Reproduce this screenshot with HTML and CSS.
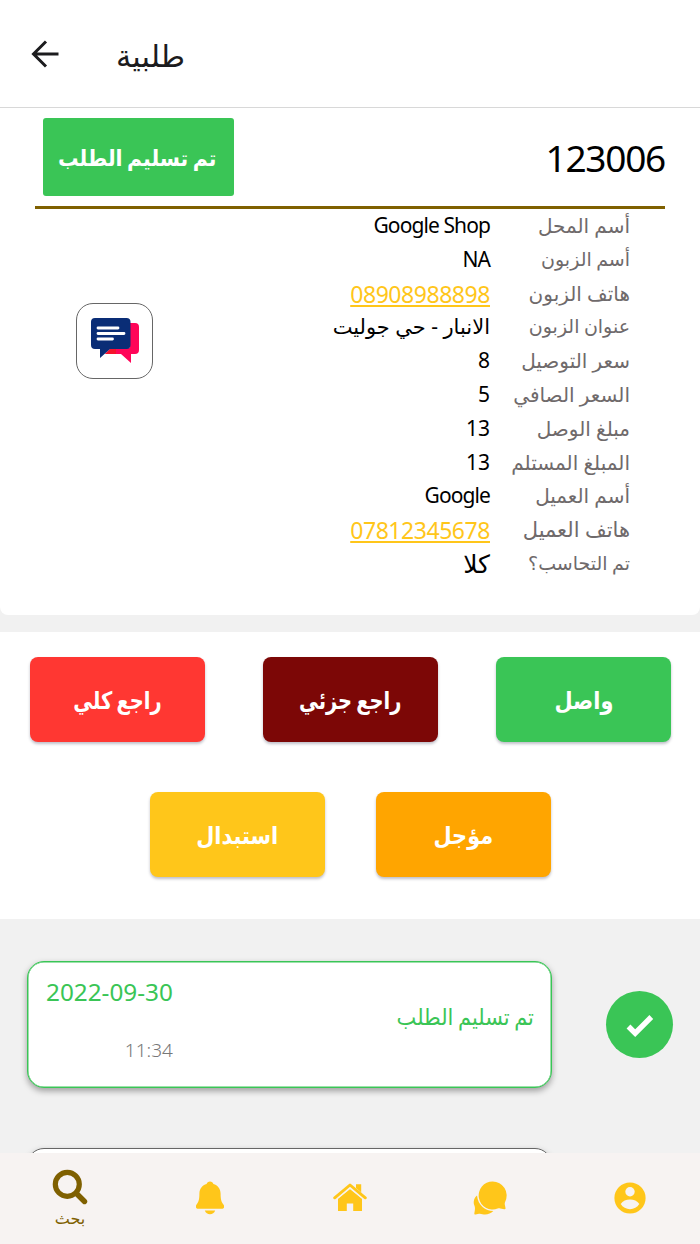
FILE: index.html
```html
<!DOCTYPE html>
<html lang="ar">
<head>
    <meta charset="UTF-8">
    <meta name="viewport" content="width=device-width, initial-scale=1.0">
    <title>طلبية</title>
    <link rel="stylesheet" href="styles.css">
</head>
<body>
    <div class="screen">
        <header class="top-bar">
            <svg class="back" viewBox="0 0 28 28" width="28" height="28"><path d="M27.500 14H3M15 1.500L2.500 14 15 26.500" fill="none" stroke="#1c1c1e" stroke-width="3"/></svg>
            <h1 dir="rtl">طلبية</h1>
        </header>

        <section class="order" dir="rtl">
            <div class="order-head">
                <div class="order-number">123006</div>
                <div class="status"><span>تم تسليم الطلب</span></div>
            </div>
            <div class="order-body">
                <div class="details">
                    <div class="row"><span class="label">أسم المحل</span><span class="value latin">Google Shop</span></div>
                    <div class="row"><span class="label tight">أسم الزبون</span><span class="value latin">NA</span></div>
                    <div class="row"><span class="label">هاتف الزبون</span><a class="value phone">08908988898</a></div>
                    <div class="row"><span class="label tight">عنوان الزبون</span><span class="value">الانبار - حي جوليت</span></div>
                    <div class="row"><span class="label">سعر التوصيل</span><span class="value">8</span></div>
                    <div class="row"><span class="label">السعر الصافي</span><span class="value">5</span></div>
                    <div class="row"><span class="label">مبلغ الوصل</span><span class="value">13</span></div>
                    <div class="row"><span class="label">المبلغ المستلم</span><span class="value">13</span></div>
                    <div class="row"><span class="label">أسم العميل</span><span class="value latin">Google</span></div>
                    <div class="row"><span class="label wide">هاتف العميل</span><a class="value phone">07812345678</a></div>
                    <div class="row"><span class="label tight">تم التحاسب؟</span><span class="value big">كلا</span></div>
                </div>
                <div class="chat">
                    <svg viewBox="0 0 50 48" width="50" height="48">
                        <path d="M40 6h5a4 4 0 0 1 4 4v23a4 4 0 0 1-4 4h-4v9l-10-9H15l6-6h19z" fill="#ff0558"/>
                        <path d="M15 37l6-6h5v6z" fill="#f5132c"/>
                        <path d="M5 1h31.500a4 4 0 0 1 4 4v23a4 4 0 0 1-4 4H20L10 41V32H5a4 4 0 0 1-4-4V5a4 4 0 0 1 4-4z" fill="#0a2d76"/>
                        <path d="M8 11h20M8 16.500h26M8 22h14.500" stroke="#fff" stroke-width="2.800" stroke-linecap="round"/>
                    </svg>
                </div>
            </div>
        </section>

        <section class="actions" dir="rtl">
            <div class="actions-row">
                <button class="btn green"><span>واصل</span></button>
                <button class="btn maroon"><span>راجع جزئي</span></button>
                <button class="btn red"><span>راجع كلي</span></button>
            </div>
            <div class="actions-row second">
                <button class="btn orange"><span>مؤجل</span></button>
                <button class="btn yellow"><span>استبدال</span></button>
            </div>
        </section>

        <section class="timeline">
            <div class="step">
                <div class="step-card">
                    <div class="step-time">
                        <span class="date">2022-09-30</span>
                        <span class="time">11:34</span>
                    </div>
                    <div class="step-name" dir="rtl">تم تسليم الطلب</div>
                </div>
                <div class="step-icon">
                    <svg viewBox="0 0 28 24" width="28" height="24"><path d="M2.500 13.500l6.700 6.700L25.300 4" fill="none" stroke="#fff" stroke-width="5.400"/></svg>
                </div>
            </div>
            <div class="step">
                <div class="step-card next"></div>
            </div>
        </section>

        <nav class="tab-bar">
            <a class="tab active">
                <svg viewBox="0 0 36 36" width="36" height="36"><circle cx="15.300" cy="15.300" r="12" fill="none" stroke="#7f6000" stroke-width="5.200"/><path d="M24.500 24.500l8 8" stroke="#7f6000" stroke-width="5.400" stroke-linecap="round"/></svg>
                <span dir="rtl">بحث</span>
            </a>
            <a class="tab">
                <svg viewBox="0 0 28 34" width="28" height="34" fill="#ffc61a"><path d="M14 .500c1.700 0 3 .900 3.400 2.500 4.300 1.300 7.200 4.800 7.200 9.500 0 6.500.900 8.500 3 11.300 1.200 1.700.500 4-1.800 4H2.200c-2.300 0-3-2.300-1.800-4 2.100-2.800 3-4.800 3-11.300C3.400 7.800 6.300 4.300 10.600 3 11 1.400 12.300.500 14 .500z"/><path d="M8.800 29.500h10.400c-1 2.600-2.800 3.800-5.200 3.800s-4.200-1.200-5.200-3.800z"/></svg>
            </a>
            <a class="tab">
                <svg viewBox="0 0 34 29" width="34" height="29"><path d="M5 15.500L17 5.500l12 10V28h-8.800v-7.500h-6.400V28H5z" fill="#ffc61a"/><path d="M23 1.200h5.200v11L23 7.700z" fill="#ffc61a"/><path d="M1.500 15.700L17 3.300l15.500 12.400" fill="none" stroke="#f7f3f2" stroke-width="4.600"/><path d="M1.700 14.800L17 2l15.300 12.800" fill="none" stroke="#ffc61a" stroke-width="2.900" stroke-linecap="round" stroke-linejoin="round"/></svg>
            </a>
            <a class="tab">
                <svg viewBox="0 0 34 34" width="34" height="34" fill="#ffc61a"><path d="M4 14.500C1 17 0 21 1.300 24.300c.700 1.900.900 3 .500 5.200l-.500 3c-.100.900.300 1.200 1.200 1l3.500-.700c1.300-.300 2 .100 3.500.400 4 .800 8-.200 10.800-3.200C12.500 30 5 24.500 4 14.500z"/><path d="M19.600.500a14 14 0 1 0 5 27.100c1-.4 1.800-.4 2.700-.2l4 .8c1 .2 1.400-.3 1.200-1.200l-.7-3.500c-.2-1.200 0-1.800.4-2.800A14 14 0 0 0 19.600.500z"/></svg>
            </a>
            <a class="tab">
                <svg viewBox="0 0 32 32" width="32" height="32"><circle cx="16" cy="16" r="15.600" fill="#ffc61a"/><circle cx="16" cy="9.800" r="4.700" fill="#f7f3f2"/><path d="M6.700 22c2-3.200 5.500-4.600 9.300-4.600s7.300 1.400 9.300 4.600c-2 3.200-5.500 5.200-9.300 5.200S8.700 25.200 6.700 22z" fill="#f7f3f2"/></svg>
            </a>
        </nav>
    </div>
</body>
</html>
```
FILE: styles.css
```css
* {
    box-sizing: border-box;
}
body {
    margin: 0;
    background-color: #f1f1f1;
    font-family: "Noto Sans", "DejaVu Sans", sans-serif;
}
.screen {
    width: 700px;
    height: 1244px;
    display: flex;
    flex-direction: column;
    overflow: hidden;
}
.top-bar {
    flex: none;
    height: 108px;
    display: flex;
    align-items: center;
    gap: 57px;
    padding: 1px 0 0 31px;
    background-color: #fff;
    border-bottom: 1px solid #d8d8d8;
}
.top-bar h1 {
    margin: 2px 0 0;
    font-size: 30.500px;
    line-height: 40px;
    font-weight: normal;
    color: #1c1c1e;
}
.order {
    flex: none;
    height: 507px;
    padding: 0 35px;
    background-color: #fff;
    border-radius: 0 0 8px 8px;
}
.order-head {
    height: 101px;
    display: flex;
    justify-content: space-between;
    align-items: center;
    padding: 0 0 1px 8px;
    border-bottom: 3px solid #7f6000;
}
.order-number {
    margin-top: 3px;
    font-size: 37px;
    line-height: 40px;
    letter-spacing: -1.250px;
}
.status {
    width: 191px;
    height: 78px;
    display: flex;
    align-items: center;
    justify-content: center;
    background-color: #3ac556;
    border-radius: 3px;
    color: #fff;
    font-size: 22px;
    font-weight: bold;
    white-space: nowrap;
}
.status span {
    margin-right: 2px;
    word-spacing: -1px;
    transform: scaleX(0.93);
}
.order-body {
    display: flex;
    justify-content: space-between;
    padding: 0 35px 0 41px;
}
.row {
    display: flex;
    height: 33.800px;
    line-height: 33.800px;
    white-space: nowrap;
}
.label {
    width: 140px;
    font-size: 20px;
    color: #6f6a6b;
}
.label.tight {
    font-size: 19px;
    word-spacing: -0.500px;
}
.label.wide {
    font-size: 21px;
}
.value {
    font-size: 21px;
    color: #000;
}
.value.latin {
    letter-spacing: -0.900px;
}
.value.big {
    font-size: 25px;
}
.value.phone {
    padding-top: 1px;
    font-size: 23px;
    letter-spacing: -0.450px;
    color: #ffc61a;
    text-decoration: underline;
}
.chat {
    width: 77px;
    height: 76px;
    margin-top: 94px;
    display: flex;
    align-items: center;
    justify-content: center;
    border: 1px solid #666;
    border-radius: 17px;
}
.actions {
    flex: none;
    height: 287px;
    margin-top: 17px;
    padding: 25px 29px 0 30px;
    background-color: #fff;
}
.actions-row {
    display: flex;
    justify-content: space-between;
}
.actions-row.second {
    justify-content: center;
    gap: 51px;
    margin-top: 50px;
}
.btn {
    width: 175px;
    height: 85px;
    padding: 0;
    border: none;
    border-radius: 8px;
    box-shadow: 0 2px 3px rgba(0, 0, 40, 0.25);
    color: #fff;
    font-family: inherit;
    font-size: 24px;
    font-weight: bold;
}
.btn span {
    display: inline-block;
    transform: scaleX(0.87);
}
.btn.maroon span,
.btn.red span {
    word-spacing: -1px;
    transform: scaleX(0.81);
}
.green {
    background-color: #3ac556;
}
.maroon {
    background-color: #7c0706;
}
.red {
    background-color: #ff3732;
}
.orange {
    background-color: #ffa500;
}
.yellow {
    background-color: #ffc61a;
}
.timeline {
    flex: 1;
    min-height: 0;
    overflow: hidden;
    padding: 42px 27px 0 27px;
}
.step {
    display: flex;
    justify-content: space-between;
    align-items: center;
    margin-bottom: 60px;
}
.step-card {
    width: 525px;
    height: 127px;
    display: flex;
    justify-content: space-between;
    padding: 15px 17px 0 18px;
    background-color: #fff;
    border: 1px solid #3ac556;
    border-radius: 17px;
    box-shadow: inset 0 0 0 0.500px #3ac556, 0 3px 6px rgba(0, 0, 0, 0.35);
}
.step-card.next {
    border-color: #666;
    box-shadow: 0 3px 6px rgba(0, 0, 0, 0.35);
}
.step-time {
    display: flex;
    flex-direction: column;
    align-items: flex-end;
}
.date {
    font-size: 24.300px;
    line-height: 30px;
    color: #3ac556;
}
.time {
    margin-top: 30px;
    font-size: 19px;
    line-height: 26px;
    font-weight: 300;
    color: #777;
}
.step-name {
    margin-top: 21px;
    font-size: 23px;
    line-height: 36px;
    word-spacing: -1px;
    color: #3ac556;
    transform: scaleX(0.91);
    transform-origin: right;
}
.step-icon {
    width: 67px;
    height: 67px;
    display: flex;
    align-items: center;
    justify-content: center;
    border-radius: 50%;
    background-color: #3ac556;
}
.tab-bar {
    flex: none;
    height: 91px;
    display: flex;
    background-color: #f7f3f2;
}
.tab {
    flex: 1;
    display: flex;
    flex-direction: column;
    align-items: center;
    justify-content: center;
    padding-bottom: 2px;
}
.tab.active {
    justify-content: flex-start;
    padding-top: 16px;
    font-size: 16px;
    line-height: 26px;
    color: #7f6000;
}
```
